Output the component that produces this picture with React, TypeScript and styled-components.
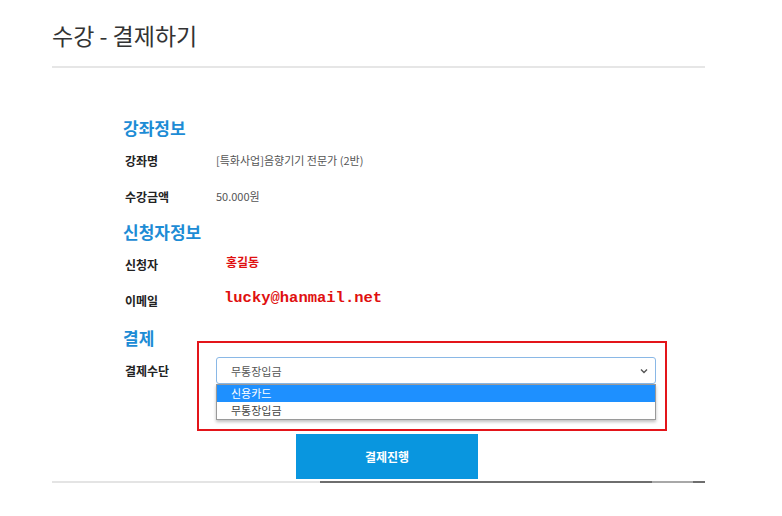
import React from "react";
import styled, {createGlobalStyle} from "styled-components";

const GlobalStyle = createGlobalStyle`
  body {
    margin: 0;
    background: #fff;
    font-family: "Noto Sans CJK KR", "Noto Sans", sans-serif;
  }
`;

const Page = styled.div`
  width: 653px;
  padding-left: 52px;
`;

const Header = styled.div`
  padding-top: 20px;
  padding-bottom: 16px;
  border-bottom: 2px solid #e6e6e6;
`;

const Title = styled.h1`
  margin: 0;
  font-size: 23px;
  line-height: 30px;
  font-weight: 400;
  color: #333;
`;

const Content = styled.div`
  padding-left: 71px;
  margin-top: 50px;
`;

const Heading = styled.h2<{gap: number}>`
  margin: ${(p) => p.gap}px 0 4px;
  font-size: 17px;
  line-height: 20px;
  font-weight: 700;
  color: #1d8cd5;
`;

const Row = styled.div<{h: number}>`
  display: flex;
  align-items: center;
  height: ${(p) => p.h}px;
`;

const Label = styled.div`
  width: 91px;
  margin-left: 2px;
  font-size: 12px;
  font-weight: 700;
  color: #222;
`;

const Value = styled.div`
  font-size: 11px;
  color: #555;
`;

const RedName = styled.div`
  margin-left: 10px;
  margin-bottom: 6px;
  font-size: 12px;
  font-weight: 700;
  color: #e01010;
`;

const RedMail = styled.div`
  margin-left: 8px;
  margin-bottom: 4px;
  font-family: "Liberation Mono", monospace;
  font-size: 15.5px;
  font-weight: 700;
  color: #e01010;
`;

const SelectWrap = styled.div`
  position: relative;
  width: 440px;
`;

const SelectBox = styled.div`
  display: flex;
  align-items: center;
  justify-content: space-between;
  box-sizing: border-box;
  height: 27px;
  padding: 0 6px 0 14px;
  border: 1px solid #8ab8e6;
  border-radius: 3px;
  font-size: 11px;
  color: #555;
`;

const Menu = styled.div`
  position: absolute;
  top: 27px;
  left: 0;
  right: 0;
  background: #fff;
  border: 1px solid #9a9a9a;
  box-shadow: 0 2px 3px rgba(0, 0, 0, 0.25);
  z-index: 2;
`;

const Option = styled.div<{active?: boolean}>`
  height: 17px;
  line-height: 17px;
  padding-left: 14px;
  font-size: 11px;
  color: ${(p) => (p.active ? "#fff" : "#444")};
  background: ${(p) => (p.active ? "#1e90ff" : "#fff")};
`;

const Annotation = styled.div`
  position: absolute;
  left: -19px;
  top: -16px;
  width: 470px;
  height: 90px;
  box-sizing: border-box;
  border: 2px solid #e3151a;
  pointer-events: none;
  z-index: 3;
`;

const SubmitButton = styled.button`
  display: block;
  margin: 50px 0 0 173px;
  width: 182px;
  height: 45px;
  border: none;
  background: #0996df;
  color: #fff;
  font-family: inherit;
  font-size: 12px;
  font-weight: 700;
`;

const BottomLine = styled.div`
  margin-top: 2px;
  height: 2px;
  background: linear-gradient(
    to right,
    #e4e4e4 0,
    #e4e4e4 268px,
    #6e6e6e 268px,
    #6e6e6e 600px,
    #a8a8a8 600px,
    #a8a8a8 641px,
    #6e6e6e 641px
  );
`;

const Chevron = () => (
  <svg width="10" height="10" viewBox="0 0 10 10">
    <path d="M2 3.5 L5 6.5 L8 3.5" fill="none" stroke="#555" strokeWidth="1.4" />
  </svg>
);

const App: React.FC = () => {
  return (
    <Page>
      <GlobalStyle />
      <Header>
        <Title>수강 - 결제하기</Title>
      </Header>
      <Content>
        <Heading gap={0}>강좌정보</Heading>
        <Row h={36}>
          <Label>강좌명</Label>
          <Value>[특화사업]음향기기 전문가 (2반)</Value>
        </Row>
        <Row h={36}>
          <Label>수강금액</Label>
          <Value>50.000원</Value>
        </Row>

        <Heading gap={8}>신청자정보</Heading>
        <Row h={36}>
          <Label>신청자</Label>
          <RedName>홍길동</RedName>
        </Row>
        <Row h={36}>
          <Label>이메일</Label>
          <RedMail>lucky@hanmail.net</RedMail>
        </Row>

        <Heading gap={10}>결제</Heading>
        <Row h={27} style={{marginTop: 9}}>
          <Label>결제수단</Label>
          <SelectWrap>
            <SelectBox>
              무통장입금
              <Chevron />
            </SelectBox>
            <Menu>
              <Option active>신용카드</Option>
              <Option>무통장입금</Option>
            </Menu>
            <Annotation />
          </SelectWrap>
        </Row>

        <SubmitButton>결제진행</SubmitButton>
      </Content>
      <BottomLine />
    </Page>
  );
};

export default App;
